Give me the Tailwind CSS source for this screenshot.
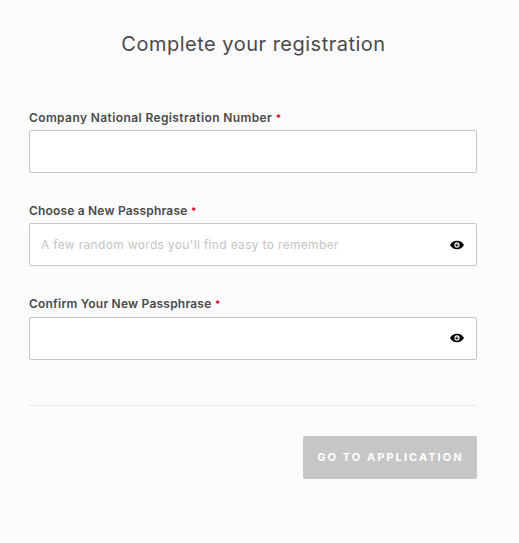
<!DOCTYPE html>
<html lang="en">
<head>
    <meta charset="UTF-8">
    <meta name="viewport" content="width=device-width, initial-scale=1.0">
    <title>Complete your registration</title>
    <script src="https://cdn.jsdelivr.net/npm/@tailwindcss/browser@4"></script>
</head>
<body class="bg-[#fbfbfe] min-h-screen overflow-hidden font-['Inter','Liberation_Sans',sans-serif] text-[#4a4a4a]">
    <main class="ml-[29px] w-[448px] pt-7">
        <h1 class="pl-[1px] text-center text-[20px] leading-8 tracking-[0.5px] whitespace-nowrap">Complete your registration</h1>

        <form class="mt-[49px]">
            <div>
                <label for="company" class="flex gap-[3.5px] h-[21px] text-[12px] leading-[17px] font-semibold tracking-[0.39px] whitespace-nowrap">Company National Registration Number <span class="pt-[1px] text-[10px] text-[#d0021b]">*</span></label>
                <input id="company" type="text" class="block w-full h-[43px] px-[11px] bg-white border border-[#c6c6c6] rounded-[2px]">
            </div>

            <div class="mt-[29px]">
                <label for="passphrase" class="flex gap-[3.5px] h-[21px] text-[12px] leading-[17px] font-semibold tracking-[0.18px] whitespace-nowrap">Choose a New Passphrase <span class="pt-[1px] text-[10px] text-[#d0021b]">*</span></label>
                <div class="flex items-center h-[43px] pl-[11px] pr-3 bg-white border border-[#c6c6c6] rounded-[2px]">
                    <input id="passphrase" type="text" placeholder="A few random words you'll find easy to remember" class="flex-1 min-w-0 text-[12px] tracking-[0.33px] placeholder:text-[#c4c4c4]">
                    <svg class="w-[14px] h-[10px]" viewBox="0 0 14 10">
                        <path d="M0 5C1.6 2.2 4 .8 7 .8S12.4 2.2 14 5C12.4 7.8 10 9.2 7 9.2S1.6 7.8 0 5Z" fill="#000"/>
                        <circle cx="7" cy="5" r="2.1" fill="none" stroke="#fff" stroke-width="1.1"/>
                        <path d="M7 3.5V5H8.5" fill="none" stroke="#fff" stroke-width=".7"/>
                    </svg>
                </div>
            </div>

            <div class="mt-[30px]">
                <label for="confirm" class="flex gap-[3.5px] h-[21px] text-[12px] leading-[15px] font-semibold tracking-[0.21px] whitespace-nowrap">Confirm Your New Passphrase <span class="pt-[1px] text-[10px] text-[#d0021b]">*</span></label>
                <div class="flex items-center h-[43px] pl-[11px] pr-3 bg-white border border-[#c6c6c6] rounded-[2px]">
                    <input id="confirm" type="text" class="flex-1 min-w-0 text-[12px]">
                    <svg class="w-[14px] h-[10px] mb-[2px]" viewBox="0 0 14 10">
                        <path d="M0 5C1.6 2.2 4 .8 7 .8S12.4 2.2 14 5C12.4 7.8 10 9.2 7 9.2S1.6 7.8 0 5Z" fill="#000"/>
                        <circle cx="7" cy="5" r="2.1" fill="none" stroke="#fff" stroke-width="1.1"/>
                        <path d="M7 3.5V5H8.5" fill="none" stroke="#fff" stroke-width=".7"/>
                    </svg>
                </div>
            </div>

            <div class="mt-[45px] pt-[30px] border-t border-[#e8e8eb] flex justify-end">
                <button type="button" class="w-[174px] h-[43px] pl-[1px] bg-[#c6c6c6] rounded-[2px] text-[11px] font-bold text-white tracking-[2.05px] whitespace-nowrap">GO TO APPLICATION</button>
            </div>
        </form>
    </main>
</body>
</html>
